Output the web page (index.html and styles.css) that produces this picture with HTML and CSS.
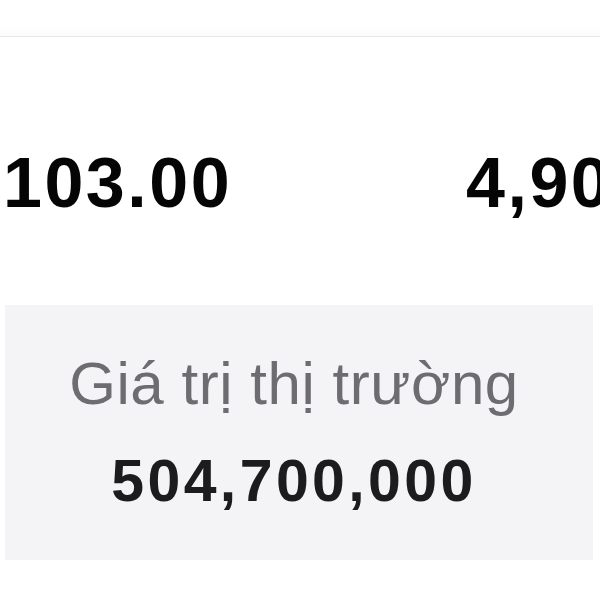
FILE: index.html
```html
<!DOCTYPE html>
<html lang="vi">
<head>
<meta charset="utf-8">
<link rel="stylesheet" href="styles.css">
</head>
<body>
<div class="page">
  <div class="top"></div>
  <div class="stats">
    <div class="stat stat-left">103.00</div>
    <div class="stat stat-right">4,900</div>
  </div>
  <div class="band">
    <div class="label">Giá trị thị trường</div>
    <div class="value">504,700,000</div>
  </div>
</div>
</body>
</html>
```
FILE: styles.css
```css
html, body {
  margin: 0;
  padding: 0;
  background: #ffffff;
  overflow: hidden;
}
.page {
  width: 600px;
  height: 600px;
  overflow: hidden;
  font-family: "Liberation Sans", Arial, sans-serif;
}
.top {
  height: 36px;
  background: linear-gradient(#ffffff 0, #ffffff 24px, #fbfbfb 36px);
  border-bottom: 1px solid #e7e7ea;
}
.stats {
  height: 268px;
  display: flex;
  align-items: flex-start;
  padding-top: 106px;
  padding-left: 3px;
  box-sizing: border-box;
  white-space: nowrap;
}
.stat {
  font-size: 70px;
  line-height: 80px;
  font-weight: 700;
  color: #050505;
  letter-spacing: 2.5px;
}
.stat-left {
  width: 463px;
  flex: none;
}
.stat-right {
  flex: none;
}
.band {
  margin: 0 7px 0 5px;
  height: 255px;
  background: #f4f4f7;
  box-sizing: border-box;
  padding: 44px 10px 0 0;
  display: flex;
  flex-direction: column;
  align-items: center;
  gap: 27px;
}
.label {
  font-size: 60px;
  line-height: 70px;
  color: #6c6c71;
  letter-spacing: 0.55px;
}
.value {
  font-size: 59px;
  line-height: 70px;
  font-weight: 700;
  color: #1c1c1e;
  letter-spacing: 3.4px;
}
```
